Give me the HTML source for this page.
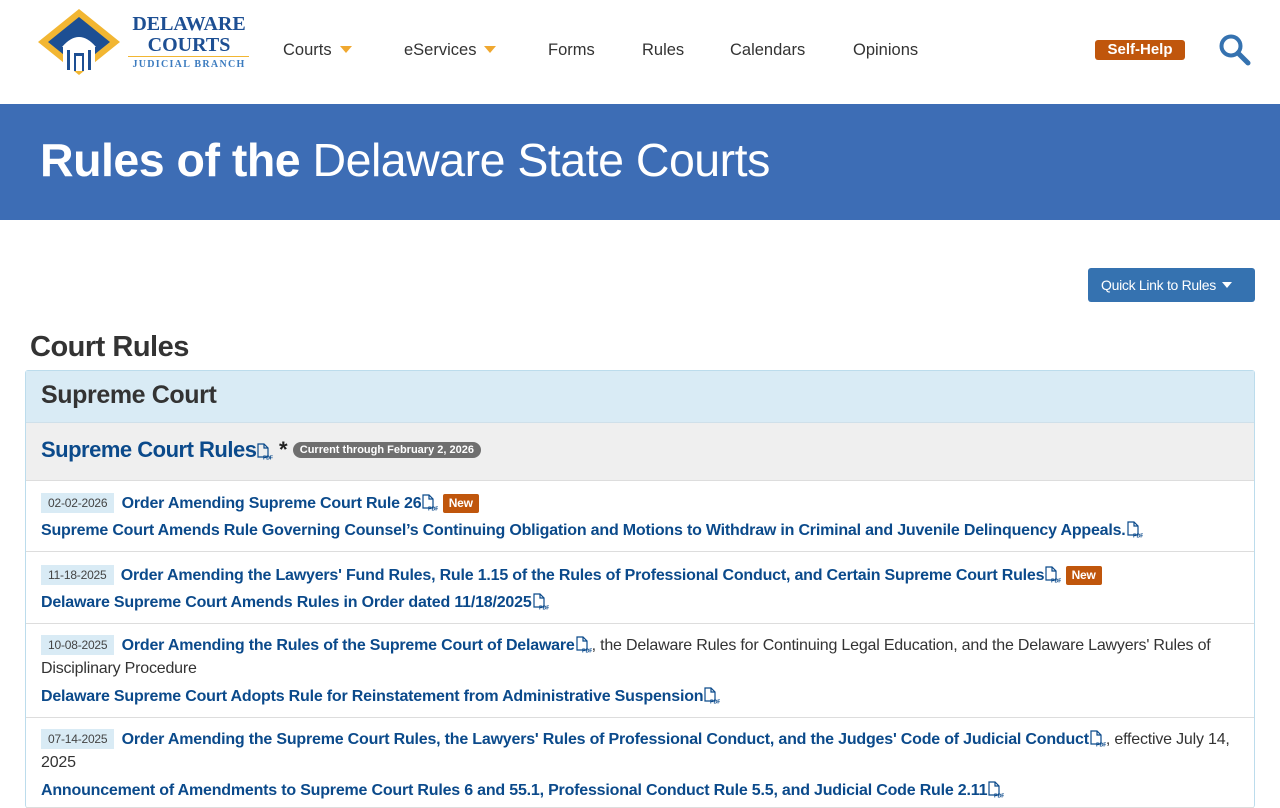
<!DOCTYPE html>
<html><head><meta charset="utf-8"><style>
*{box-sizing:border-box;margin:0;padding:0}
body{width:1280px;height:800px;overflow:hidden;background:#fff;font-family:"Liberation Sans",sans-serif;color:#333}
.hdr{height:104px;position:relative}
.nav{position:absolute;top:41px;font-size:16.5px;color:#333}
.tri{display:inline-block;width:0;height:0;border-left:6px solid transparent;border-right:6px solid transparent;border-top:7px solid #f0a830;margin-left:8px;vertical-align:2px}
.band{background:#3d6db5;height:116px;color:#fff;font-size:46.5px;padding:29px 0 0 40px;letter-spacing:-0.5px}
.btn{position:absolute;left:1088px;top:268px;width:167px;height:34px;background:#3572b0;border-radius:3px;color:#fff;font-size:14px;line-height:34px;padding-left:13px;letter-spacing:-0.3px}
.btn .t{display:inline-block;border-left:5px solid transparent;border-right:5px solid transparent;border-top:6px solid #fff;margin-left:6px;vertical-align:2px}
h2{position:absolute;left:30px;top:331px;font-size:29px;font-weight:bold;color:#333;letter-spacing:-0.5px}
.panel{position:absolute;left:25px;top:370px;width:1230px;border:1px solid #bcdcec;border-radius:3px;border-bottom:none}
.ph{height:52px;background:#d9ebf5;font-size:25px;font-weight:bold;padding:10px 15px;color:#333;letter-spacing:-0.4px;border-bottom:1px solid #cfe0ea}
.gr{height:58px;background:#efefef;padding:14px 15px;border-bottom:1px solid #ddd;font-size:22px;color:#0b4a8b;font-weight:bold;letter-spacing:-0.5px}
.pill{display:inline-block;background:#6f6f6f;color:#fff;font-size:11px;border-radius:9px;padding:2px 7px;vertical-align:4px;letter-spacing:0}
.it{border-bottom:1px solid #ddd;padding:9px 15px 0;font-size:16px;line-height:27px;letter-spacing:-0.2px}
a{color:#0b4a8b;font-weight:bold;text-decoration:none}
.d{display:inline-block;background:#d9ebf5;color:#444;font-size:12px;padding:0 7px;line-height:20px;margin-right:3px;vertical-align:1px}
.new{display:inline-block;background:#c0560c;color:#fff;font-size:12px;font-weight:bold;border-radius:2px;padding:0 6px;line-height:19px;vertical-align:1px}
.pdf{display:inline-block;width:17px;height:17px;vertical-align:-3px}
</style></head><body>
<div class="hdr">
<svg style="position:absolute;left:38px;top:9px" width="82" height="66" viewBox="0 0 82 66"><polygon points="41,0 82,33 41,66 0,33" fill="#f2b632"/><polygon points="41,8 72,33 41,58 10,33" fill="#1d4f93"/><path d="M24 38 Q41 18 58 38 Z" fill="#fff"/><rect x="25" y="38" width="32" height="24" fill="#fff"/><rect x="29" y="41" width="3" height="20" fill="#1d4f93"/><rect x="50" y="41" width="3" height="20" fill="#1d4f93"/><rect x="36" y="44" width="10" height="18" fill="#1d4f93"/><rect x="38" y="47" width="6" height="15" fill="#fff"/></svg>
<div style="position:absolute;left:128px;top:14px;font-family:'Liberation Serif',serif;font-weight:bold;color:#1d4f93;font-size:20px;line-height:21px;text-align:center;width:122px">DELAWARE<br>COURTS</div>
<div style="position:absolute;left:128px;top:56px;width:121px;border-top:1px solid #f2b632"></div>
<div style="position:absolute;left:128px;top:59px;width:122px;text-align:center;font-family:'Liberation Serif',serif;font-weight:bold;color:#3b7bbf;font-size:10px;letter-spacing:1.3px">JUDICIAL BRANCH</div>
<div class="nav" style="left:283px">Courts<span class="tri"></span></div>
<div class="nav" style="left:404px">eServices<span class="tri"></span></div>
<div class="nav" style="left:548px">Forms</div>
<div class="nav" style="left:642px">Rules</div>
<div class="nav" style="left:730px">Calendars</div>
<div class="nav" style="left:853px">Opinions</div>
<div style="position:absolute;left:1095px;top:40px;width:90px;height:20px;background:#c0560c;border-radius:3px;color:#fff;font-weight:bold;font-size:15px;line-height:20px;text-align:center">Self-Help</div>
<svg style="position:absolute;left:1218px;top:33px" width="34" height="34" viewBox="0 0 34 34"><circle cx="13" cy="13" r="9.5" fill="none" stroke="#3572b0" stroke-width="4"/><line x1="20" y1="20" x2="30" y2="30" stroke="#3572b0" stroke-width="5" stroke-linecap="round"/></svg>
</div>
<div class="band"><b>Rules of the</b> Delaware State Courts</div>
<div class="btn">Quick Link to Rules<span class="t"></span></div>
<h2>Court Rules</h2>
<svg width="0" height="0" style="position:absolute"><defs><symbol id="p" viewBox="0 0 17 17"><path d="M2 1h6l4 4v9H2z" fill="none" stroke="#0b4a8b" stroke-width="1.2"/><path d="M8 1v4h4" fill="none" stroke="#0b4a8b" stroke-width="1.2"/><text x="7" y="16.5" font-size="5.5" font-weight="bold" fill="#0b4a8b" font-family="Liberation Sans">PDF</text></symbol></defs></svg>
<div class="panel">
<div class="ph">Supreme Court</div>
<div class="gr">Supreme Court Rules<svg class="pdf"><use href="#p"/></svg><span style="color:#222"> *</span> <span class="pill">Current through February 2, 2026</span></div>
<div class="it" style="height:71px"><span class="d">02-02-2026</span> <a>Order Amending Supreme Court Rule 26</a><svg class="pdf"><use href="#p"/></svg> <span class="new">New</span><br><a>Supreme Court Amends Rule Governing Counsel’s Continuing Obligation and Motions to Withdraw in Criminal and Juvenile Delinquency Appeals.</a><svg class="pdf"><use href="#p"/></svg></div>
<div class="it" style="height:72px;padding-top:10px"><span class="d">11-18-2025</span> <a>Order Amending the Lawyers' Fund Rules, Rule 1.15 of the Rules of Professional Conduct, and Certain Supreme Court Rules</a><svg class="pdf"><use href="#p"/></svg> <span class="new">New</span><br><a>Delaware Supreme Court Amends Rules in Order dated 11/18/2025</a><svg class="pdf"><use href="#p"/></svg></div>
<div class="it" style="height:94px;line-height:23px;padding-top:10px"><span class="d">10-08-2025</span> <a>Order Amending the Rules of the Supreme Court of Delaware</a><svg class="pdf"><use href="#p"/></svg>, the Delaware Rules for Continuing Legal Education, and the Delaware Lawyers' Rules of Disciplinary Procedure<div style="height:5px"></div><a>Delaware Supreme Court Adopts Rule for Reinstatement from Administrative Suspension</a><svg class="pdf"><use href="#p"/></svg></div>
<div class="it" style="height:90px;line-height:23px;padding-top:10px"><span class="d">07-14-2025</span> <a>Order Amending the Supreme Court Rules, the Lawyers' Rules of Professional Conduct, and the Judges' Code of Judicial Conduct</a><svg class="pdf"><use href="#p"/></svg>, effective July 14, 2025<div style="height:5px"></div><a>Announcement of Amendments to Supreme Court Rules 6 and 55.1, Professional Conduct Rule 5.5, and Judicial Code Rule 2.11</a><svg class="pdf"><use href="#p"/></svg></div>
</div>
</body></html>
